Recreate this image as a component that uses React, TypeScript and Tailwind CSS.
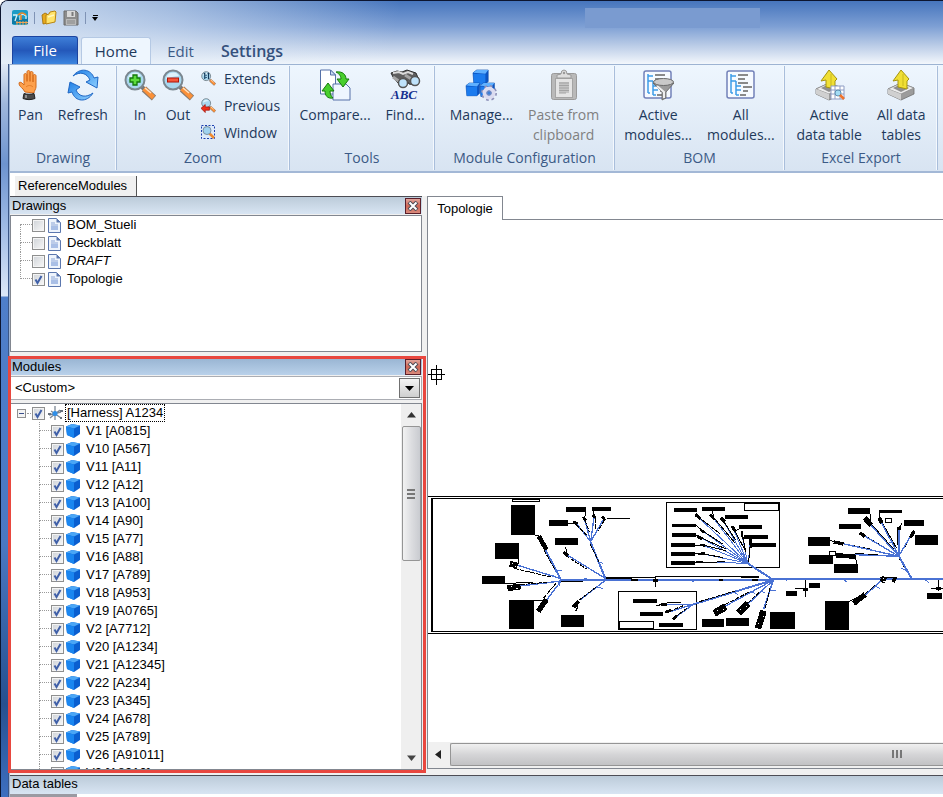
import React from "react";
import type { ReactNode } from "react";

/* ---------- ribbon icons ---------- */

function AppLogo() {
  return (
    <svg width="16" height="16" viewBox="0 0 16 16">
      <rect width="16" height="15" rx="2" fill="#1c9cc6" />
      <path d="M0 8 C5 3 9 13 16 7 V14 H0Z" fill="#0c7aa6" />
      <path d="M1 5h4l-2 6M8 10V6l3-2 3 2v3" stroke="#d8f2f8" strokeWidth="1.3" fill="none" />
      <path d="M6 5c3-3 6-2 8 0M9 5v5" stroke="#e98a2a" strokeWidth="1.6" fill="none" />
      <path d="M4 12.500h12M5 11v4M8 11v4M11 11v4M14 11v4" stroke="#f0a455" strokeWidth="1" />
    </svg>
  );
}

function OpenIcon() {
  return (
    <svg width="16" height="16" viewBox="0 0 16 16">
      <path d="M1 5l3-2 2 1 1 9-5 1z" fill="#e8a91c" stroke="#9a6a05" strokeWidth=".8" />
      <path d="M5 5l3-1 1-2 5-1 1 1-1 10-9 2z" fill="#ffe36a" stroke="#b98510" strokeWidth="1" />
      <path d="M7 7l6-2" stroke="#fff7c0" strokeWidth="1.500" />
    </svg>
  );
}

function SaveIcon() {
  return (
    <svg width="16" height="16" viewBox="0 0 16 16">
      <path d="M1 1h12l2 2v12H1z" fill="#8d8d8d" stroke="#6d6d6d" />
      <rect x="4" y="1" width="8" height="6" fill="#d9d9d9" />
      <rect x="8.500" y="2" width="2" height="4" fill="#7a7a7a" />
      <rect x="3" y="9" width="10" height="6" fill="#b9b9b9" />
      <path d="M4 11h8M4 13h8" stroke="#858585" />
    </svg>
  );
}

function HandIcon() {
  return (
    <svg width="24" height="32" viewBox="3 0 24 32">
      <path
        d="M10 23 L8 20 C6 18 4 17 4 14 C4 13 6 13 7 14 L9 16 V6 C9 4 11.500 4 12 6 V12 V3 C12 1 15 1 15 3 V12 V4 C15 2 18 2 18 4 V13 V7 C18 5 21 5 21 7 V18 C21 20 19 22 19 24Z"
        fill="#fda04c"
        stroke="#d26a1b"
        strokeWidth="1"
      />
      <path d="M12 6v7M15 5v8M18 7v6M11 18c2-2 5-2 7 0" stroke="#e27b28" fill="none" />
      <path d="M9 24.500c3 1 7 1 10 0l1 5c-4 1.500-8 1.500-12 0z" fill="#4a4a4a" stroke="#222" />
      <path d="M11 26v3" stroke="#aaa" strokeWidth="1.500" />
    </svg>
  );
}

function RefreshIcon() {
  return (
    <svg width="32" height="32" viewBox="0 0 32 32">
      <defs>
        <linearGradient id="rf" x1="0" y1="0" x2="1" y2="1">
          <stop offset="0" stopColor="#1f7fe6" />
          <stop offset="1" stopColor="#8fd0ff" />
        </linearGradient>
      </defs>
      <path d="M6 7 C13-2 24 0 27 9 L31 8 30 19 19 13 23 11 C20 4 13 2 6 7Z" fill="url(#rf)" stroke="#1e66c4" />
      <path d="M26 24 C20 34 8 33 5 23 L1 24 3 13 13 18 9 21 C12 28 19 29 26 24Z" fill="url(#rf)" stroke="#1e66c4" />
    </svg>
  );
}

function Lens({ size, children }: { size: number; children?: ReactNode }) {
  return (
    <svg width={size} height={size} viewBox="0 0 32 32">
      <path d="M18 18l4 4" stroke="#777" strokeWidth="4" />
      <path d="M20 20l10 9" stroke="#8a7a6c" strokeWidth="6.500" />
      <path d="M20 19.500l9.500 9" stroke="#fb9038" strokeWidth="4.500" />
      <path d="M21 19l6 5" stroke="#ffe0bd" strokeWidth="1.500" />
      <circle cx="11" cy="11" r="9.500" fill="#a9d8ef" stroke="#7b8790" strokeWidth="2" />
      <path d="M4 10a7 7 0 0 1 13-3c-4 0-8 1-13 3z" fill="#def2fb" />
      {children}
    </svg>
  );
}

function ZoomInIcon() {
  return (
    <Lens size={32}>
      <path d="M9 6h4v3h3v4h-3v3H9v-3H6V9h3z" fill="#5ddc3c" stroke="#12780c" strokeWidth="1.300" />
    </Lens>
  );
}

function ZoomOutIcon() {
  return (
    <Lens size={32}>
      <rect x="5.500" y="9" width="11" height="4" fill="#f6573a" stroke="#b01508" strokeWidth="1" />
    </Lens>
  );
}

function ExtendsIcon() {
  return (
    <Lens size={15}>
      <path d="M6 6l2-1v12M14 6l2-1v12M11 8v2M11 13v2" stroke="#123a5c" strokeWidth="2.500" fill="none" />
    </Lens>
  );
}

function PreviousIcon() {
  return (
    <Lens size={15}>
      <path d="M0 22l9-8v5h9v7H9v5z" fill="#ee2f1a" stroke="#9c0f05" strokeWidth="1.500" />
    </Lens>
  );
}

function ZoomWindowIcon() {
  return (
    <svg width="15" height="15" viewBox="0 0 15 15">
      <rect x=".5" y=".5" width="13" height="13" fill="#dceafa" stroke="#1c3fae" strokeDasharray="2 1.500" />
      <path d="M8 8l5 5" stroke="#f08a30" strokeWidth="2.500" />
      <circle cx="6" cy="5.500" r="4" fill="#9fd2f0" stroke="#7b8fa0" />
    </svg>
  );
}

function CompareIcon() {
  return (
    <svg width="32" height="32" viewBox="0 0 32 32">
      <path d="M1.500 1h10l5 5v19h-15z" fill="#fff" stroke="#5671a8" />
      <path d="M11.500 1v5h5z" fill="#c9dcf5" stroke="#5671a8" />
      <path d="M14 15h13l4 4v12H14z" fill="#eef6ff" stroke="#5671a8" />
      <path d="M17 3 C24 2 27 6 27 10 H30 L24 18 18 10 H22 C22 8 21 5 17 3Z" fill="#48cf2d" stroke="#167a0c" />
      <path d="M14 29 C8 30 6 26 6 22 H3 L9 14 15 22 H11 C11 25 12 27 14 29Z" fill="#48cf2d" stroke="#167a0c" />
    </svg>
  );
}

function FindIcon() {
  return (
    <svg width="32" height="32" viewBox="0 0 32 32">
      <path d="M2 4l6-2 5 1 5-2 9 3 3 7-4 5-6-1-3-5-2 5-6-1-5-6z" fill="#5f5f5f" stroke="#2e2e2e" />
      <path d="M4 4l6-1 4 2 5-2 5 2" stroke="#dcdcdc" strokeWidth="2" fill="none" />
      <path d="M4 8l7 5M16 6l8 5" stroke="#a5a5a5" strokeWidth="3" />
      <circle cx="14" cy="14" r="4.500" fill="#bfe2fa" stroke="#555" strokeWidth="1.500" />
      <circle cx="26" cy="12" r="4.500" fill="#bfe2fa" stroke="#555" strokeWidth="1.500" />
      <text x="2" y="30" fontFamily="Liberation Serif, serif" fontStyle="italic" fontWeight="700" fontSize="13" fill="#15308f">
        ABC
      </text>
    </svg>
  );
}

function Block({ x, y, s }: { x: number; y: number; s: number }) {
  return (
    <g transform={`translate(${x} ${y}) scale(${s})`}>
      <path d="M0 3l4-3h12v12l-3 3H1z" fill="#0c55c4" stroke="#0a4cab" strokeWidth=".7" />
      <path d="M0 3l4-3h12l-3 4z" fill="#5fb0ff" />
      <path d="M.5 4l12.500.5V15H1z" fill="#1b7bee" />
    </g>
  );
}

function ManageIcon() {
  return (
    <svg width="32" height="32" viewBox="0 0 32 32">
      <Block x={8} y={1} s={0.95} />
      <Block x={1} y={14} s={0.85} />
      <Block x={15} y={14} s={0.9} />
      <circle cx="24" cy="24" r="6.500" fill="none" stroke="#8d90b8" strokeWidth="3" strokeDasharray="2.500 2.600" />
      <circle cx="24" cy="24" r="4.500" fill="none" stroke="#dcdcf0" strokeWidth="4" />
      <circle cx="24" cy="24" r="2.200" fill="#3c7fd8" stroke="#8d90b8" />
    </svg>
  );
}

function PasteIcon() {
  return (
    <svg width="32" height="32" viewBox="0 0 32 32">
      <rect x="3.500" y="4.500" width="25" height="26" rx="2" fill="#b9b9b9" stroke="#9a9a9a" />
      <rect x="7.500" y="9.500" width="17" height="19" fill="#e4e4e4" stroke="#a4a4a4" />
      <path d="M9 9V6l4-1a3 4 0 0 1 6 0l4 1v3z" fill="#dedede" stroke="#9a9a9a" />
      <circle cx="16" cy="4" r="1.200" fill="#999" />
      <rect x="11" y="13" width="10" height="11" fill="#c4c4c4" />
      <path d="M11 14h10M11 16.500h10M11 19h10M11 21.500h10M11 24h7" stroke="#a4a4a4" />
    </svg>
  );
}

function TreeListIcon({ funnel = false }: { funnel?: boolean }) {
  return (
    <svg width="32" height="32" viewBox="0 0 32 32">
      <rect x="2" y="2" width="27" height="27" rx="2" fill="#f6faff" stroke="#7280b8" strokeWidth="1.500" />
      <path d="M6 5v19M6 7h5M6 12h5M11 12v14M11 17h5M11 21h5M6 24h2M11 26h3" stroke="#3d9ce8" strokeWidth="1.500" fill="none" />
      <path d="M13 6h10M13 10h7M13 14h10M18 18h9M18 22h5M15 26h6" stroke="#8a8a8a" strokeWidth="2" />
      {funnel && (
        <>
          <path d="M11 14l9 9v8l4-2v-6l8-9z" fill="#9b9b9b" stroke="#5f5f5f" strokeWidth=".8" />
          <path d="M15 17l7 6v6" stroke="#efefef" strokeWidth="2" fill="none" />
          <ellipse cx="21.500" cy="13" rx="10" ry="3.500" fill="#c9c9c9" stroke="#6b6b6b" />
        </>
      )}
    </svg>
  );
}

function ExportIcon({ table = false }: { table?: boolean }) {
  return (
    <svg width="32" height="32" viewBox="0 0 32 32">
      <path d="M3 20l13-6 13 5v6l-13 6-13-6z" fill="#9c9c9c" stroke="#6f6f6f" strokeWidth=".8" />
      <path d="M3 20l13-6 13 5-13 6z" fill="#ededed" stroke="#8b8b8b" strokeWidth=".8" />
      <path d="M16 25v6l-13-6v-5z" fill="#d0d0d0" />
      <path d="M8 19l8-4 8 4-8 4z" fill="#8e8e8e" />
      <path d="M16 1l8 9-2 2v8l-9-2v-7l-5 1z" fill="#f0df35" stroke="#a59410" />
      <path d="M18 5v12" stroke="#d6c626" strokeWidth="1.500" />
      {table && (
        <>
          <path d="M18 17h13v13H18z" fill="#fff" stroke="#8e9cc4" />
          <path d="M18 21h13M18 25h13M22 17v13M27 17v13" stroke="#8e9cc4" />
          <circle cx="25" cy="24" r="3" fill="#a3dcf5" stroke="#5c8fb0" />
          <path d="M27 26l4 4" stroke="#f0722a" strokeWidth="2.500" />
        </>
      )}
    </svg>
  );
}

/* ---------- ribbon ---------- */

function BigButton({ icon, lines, disabled = false, width = "w-auto" }: { icon: ReactNode; lines: string[]; disabled?: boolean; width?: string }) {
  return (
    <button
      disabled={disabled}
      className={`flex flex-col items-center text-sm leading-5 text-[#1e395b] disabled:text-[#808080] ${width}`}
    >
      <span className="mb-1 block h-8">{icon}</span>
      {lines.map((l) => (
        <span key={l} className="whitespace-nowrap">
          {l}
        </span>
      ))}
    </button>
  );
}

function SmallButton({ icon, label }: { icon: ReactNode; label: string }) {
  return (
    <button className="flex h-[27px] items-center gap-2 text-sm text-[#1e395b]">
      {icon}
      {label}
    </button>
  );
}

function Group({ title, width, children }: { title: string; width: string; children: ReactNode }) {
  return (
    <section className={`flex shrink-0 flex-col border-r border-[#a9bedb] shadow-[inset_-1px_0_0_#f4f8fd] ${width}`}>
      <div className="flex flex-1 items-start justify-center gap-[15px] pt-[3px]">{children}</div>
      <h2 className="h-[22px] text-center text-sm leading-5 text-[#3b5a86]">{title}</h2>
    </section>
  );
}

function Ribbon() {
  return (
    <div className="flex h-[108px] overflow-hidden border-b-2 border-[#a3b8d6] bg-linear-to-b from-[#eef6fe] to-[#d8e4f2] py-px">
      <Group title="Drawing" width="w-[107px]">
        <BigButton icon={<HandIcon />} lines={["Pan"]} />
        <BigButton icon={<RefreshIcon />} lines={["Refresh"]} />
      </Group>
      <Group title="Zoom" width="w-[173px]">
        <div className="flex pr-[5px]">
          <BigButton icon={<ZoomInIcon />} lines={["In"]} width="w-[38px]" />
          <BigButton icon={<ZoomOutIcon />} lines={["Out"]} width="w-[38px]" />
          <div className="-mt-1 ml-1 flex flex-col">
            <SmallButton icon={<ExtendsIcon />} label="Extends" />
            <SmallButton icon={<PreviousIcon />} label="Previous" />
            <SmallButton icon={<ZoomWindowIcon />} label="Window" />
          </div>
        </div>
      </Group>
      <Group title="Tools" width="w-[145px]">
        <BigButton icon={<CompareIcon />} lines={["Compare..."]} />
        <BigButton icon={<FindIcon />} lines={["Find..."]} />
      </Group>
      <Group title="Module Configuration" width="w-[180px]">
        <BigButton icon={<ManageIcon />} lines={["Manage..."]} />
        <BigButton icon={<PasteIcon />} lines={["Paste from", "clipboard"]} disabled />
      </Group>
      <Group title="BOM" width="w-[170px]">
        <BigButton icon={<TreeListIcon funnel />} lines={["Active", "modules..."]} />
        <BigButton icon={<TreeListIcon />} lines={["All", "modules..."]} />
      </Group>
      <Group title="Excel Export" width="w-[153px]">
        <BigButton icon={<ExportIcon table />} lines={["Active", "data table"]} />
        <BigButton icon={<ExportIcon />} lines={["All data", "tables"]} />
      </Group>
    </div>
  );
}

function TitleBar() {
  return (
    <header className="flex h-[63px] shrink-0 flex-col justify-between bg-[linear-gradient(100deg,rgba(226,236,247,.85)_0%,rgba(226,236,247,.55)_18%,rgba(226,236,247,0)_42%),linear-gradient(to_bottom,#4675bd_0%,#7d9fd4_40%,#b5c8e5_68%,#f3f7fc_100%)] pl-[11px]">
      <div className="flex items-center pt-[7px]">
        <AppLogo />
        <span className="mx-[6px] h-3 w-px bg-[#7f93b5]" />
        <button aria-label="Open">
          <OpenIcon />
        </button>
        <button aria-label="Save" className="ml-[6px]">
          <SaveIcon />
        </button>
        <span className="mx-[6px] h-3 w-px bg-[#7f93b5]" />
        <button aria-label="Customize toolbar" className="flex flex-col items-center gap-px">
          <span className="h-px w-[5px] bg-black" />
          <svg width="6" height="4" viewBox="0 0 6 4">
            <path d="M0 0h6L3 4z" />
          </svg>
        </button>
        <span className="ml-auto mr-[183px] h-5 w-[175px] bg-[#7a9bd0]" />
      </div>
      <nav className="flex items-end">
        <button className="mr-[3px] h-7 w-[66px] rounded-t-[3px] border border-b-0 border-[#1c44a0] bg-linear-to-b from-[#3f7fd8] via-[#2458ba] to-[#3d86e0] text-[15px] text-white">
          File
        </button>
        <button className="-mb-px h-7 w-[70px] rounded-t-[3px] border border-b-0 border-[#b5c9e4] bg-[#eef6fe] text-[15px] text-[#1e395b]">
          Home
        </button>
        <button className="h-[26px] w-[59px] text-[15px] text-[#3b5a86]">Edit</button>
        <button className="h-[26px] px-[11px] text-base font-semibold text-[#34507c]">Settings</button>
      </nav>
    </header>
  );
}

/* ---------- trees ---------- */

function Check({ id, checked }: { id: string; checked: boolean }) {
  return (
    <span className="grid shrink-0">
      <input
        id={id}
        type="checkbox"
        defaultChecked={checked}
        className="peer col-start-1 row-start-1 size-[13px] appearance-none border border-[#8e8f8f] bg-linear-to-br from-[#cfd3d8] to-[#f8f8f8] shadow-[inset_0_0_0_1px_#f4f4f4]"
      />
      <svg className="pointer-events-none invisible col-start-1 row-start-1 peer-checked:visible" width="13" height="13" viewBox="0 0 13 13">
        <path d="M3.500 6.500l2 3.500 4-7" fill="none" stroke="#4060a8" strokeWidth="2" />
      </svg>
    </span>
  );
}

function PageIcon() {
  return (
    <svg width="13" height="15" viewBox="0 0 13 15">
      <path d="M.5.5h8l4 4v10H.5z" fill="#eef4fc" stroke="#5b77ae" />
      <path d="M8.500.5v4h4z" fill="#5b77ae" />
      <path d="M3 5h4M3 7h7" stroke="#8ba5d6" />
      <path d="M3 8h7v4H3z" fill="#a9bfe6" />
    </svg>
  );
}

function CubeIcon() {
  return (
    <svg width="14" height="14" viewBox="0 0 14 14">
      <path d="M0 2.500L6 0l8 1.500V10l-6 4-7-3z" fill="#0a5fd0" />
      <path d="M0 2.500L6 0l8 1.500-6 3z" fill="#4aa6f6" />
      <path d="M0 2.500l8 2V14l-7-3z" fill="#1a86f0" />
    </svg>
  );
}

function HarnessIcon() {
  return (
    <svg width="15" height="15" viewBox="0 0 15 15">
      <path d="M7 0v14M1 9l12-3M2 12l10-8M3 5l10 7" stroke="#7c8794" strokeWidth="1.300" />
      <circle cx="7" cy="7.500" r="2.500" fill="#2f8fe8" />
      <path d="M0 8h3M12 5h3M12 12h2" stroke="#69727d" strokeWidth="2" />
    </svg>
  );
}

function Guide({ half = "" }: { half?: string }) {
  return (
    <span className="flex h-[18px] w-[12px] shrink-0 flex-col">
      <span className={`h-[9px] border-b border-dotted border-[#9a9a9a] ${half === "first" ? "" : "border-l"}`} />
      <span className={`h-[9px] border-dotted border-[#9a9a9a] ${half === "last" ? "" : "border-l"}`} />
    </span>
  );
}

const drawings = [
  { name: "BOM_Stueli", on: false },
  { name: "Deckblatt", on: false },
  { name: "DRAFT", on: false, italic: true },
  { name: "Topologie", on: true },
];

const modules = [
  "V1 [A0815]", "V10 [A567]", "V11 [A11]", "V12 [A12]", "V13 [A100]", "V14 [A90]", "V15 [A77]",
  "V16 [A88]", "V17 [A789]", "V18 [A953]", "V19 [A0765]", "V2 [A7712]", "V20 [A1234]", "V21 [A12345]",
  "V22 [A234]", "V23 [A345]", "V24 [A678]", "V25 [A789]", "V26 [A91011]", "V3 [A8910]",
];

function PanelHeader({ title, active = false }: { title: string; active?: boolean }) {
  return (
    <div
      className={`flex h-[18px] shrink-0 items-center justify-between border-t border-[#4d4d55] pl-[2px] pr-[1px] ${
        active ? "bg-linear-to-b from-[#98b4d2] to-[#b9d1ea]" : "bg-linear-to-b from-[#bccbd9] to-[#d8e5f3]"
      }`}
    >
      <h2 className="leading-4">{title}</h2>
      <button
        aria-label={`Close ${title}`}
        className="flex h-4 w-4 items-center justify-center border border-[#5a1f2a] bg-linear-to-b from-[#e0a49b] via-[#cf6655] to-[#d98a7c]"
      >
        <svg width="12" height="10" viewBox="0 0 12 10">
          <path d="M2 1l8 8M10 1l-8 8" stroke="#4b4b55" strokeWidth="4" />
          <path d="M2.500 1.500l7 7M9.500 1.500l-7 7" stroke="#fff" strokeWidth="2" />
        </svg>
      </button>
    </div>
  );
}

function DrawingsPanel() {
  return (
    <section className="flex h-[156px] shrink-0 flex-col">
      <PanelHeader title="Drawings" />
      <ul className="mt-[1px] flex-1 border border-[#828790] bg-white">
        {drawings.map((d, i) => (
          <li key={d.name} className="flex h-[18px] items-center pl-[9px]">
            <Guide half={i === 0 ? "first" : i === drawings.length - 1 ? "last" : ""} />
            <Check id={`drawing-${i}`} checked={d.on} />
            <label htmlFor={`drawing-${i}`} className="ml-[3px] flex items-center gap-[6px]">
              <PageIcon />
              <span className={d.italic ? "italic" : ""}>{d.name}</span>
            </label>
          </li>
        ))}
      </ul>
    </section>
  );
}

function ModulesPanel() {
  return (
    <section className="relative mt-[5px] flex min-h-0 flex-1 flex-col pb-[3px]">
      <PanelHeader title="Modules" active />
      <div className="relative mt-px flex h-6 shrink-0 items-center border border-[#abadb3] bg-white">
        <select aria-label="Module configuration" className="h-full w-full appearance-none bg-white pl-[4px] outline-none">
          <option>&lt;Custom&gt;</option>
        </select>
        <span className="pointer-events-none absolute right-px flex h-5 w-[21px] items-center justify-center border border-[#707070] bg-linear-to-b from-[#f4f4f4] to-[#cfcfcf]">
          <svg width="9" height="5" viewBox="0 0 9 5">
            <path d="M0 0h9L4.500 5z" />
          </svg>
        </span>
      </div>
      <div className="mt-[3px] flex min-h-0 flex-1 border border-[#828790] bg-white">
        <div className="min-w-0 flex-1 overflow-hidden">
          <div className="flex h-[18px] items-center pl-[6px]">
            <button aria-label="Collapse" className="flex size-[9px] items-center justify-center border border-[#919191] bg-[#f3f3f3]">
              <span className="h-px w-[5px] bg-[#3a4f8c]" />
            </button>
            <span className="mx-px w-[4px] border-t border-dotted border-[#9a9a9a]" />
            <Check id="harness" checked />
            <label htmlFor="harness" className="ml-[3px] flex items-center gap-[2px]">
              <HarnessIcon />
              <span className="border border-dotted border-black px-px leading-4">[Harness] A1234</span>
            </label>
          </div>
          <ul>
            {modules.map((m, i) => (
              <li key={m} className="flex h-[18px] items-center pl-[28px]">
                <Guide />
                <Check id={`module-${i}`} checked />
                <label htmlFor={`module-${i}`} className="ml-[2px] flex items-center gap-[6px]">
                  <CubeIcon />
                  {m}
                </label>
              </li>
            ))}
          </ul>
        </div>
        <div className="flex w-5 flex-col items-center bg-[#efefef]">
          <svg className="my-2" width="9" height="6" viewBox="0 0 9 6">
            <path d="M0 5.500L4.500 0 9 5.500z" fill="#333" />
          </svg>
          <div className="flex h-[37%] w-[19px] flex-col items-center justify-center gap-[2px] rounded-[2px] border border-[#959595] bg-linear-to-r from-[#f2f2f2] via-[#dcdde0] to-[#c9cbd0]">
            <span className="h-[2px] w-2 bg-[#777]" />
            <span className="h-[2px] w-2 bg-[#777]" />
            <span className="h-[2px] w-2 bg-[#777]" />
          </div>
          <svg className="mb-2 mt-auto" width="9" height="6" viewBox="0 0 9 6">
            <path d="M0 .5h9L4.500 6z" fill="#444" />
          </svg>
        </div>
      </div>
      {/* highlight drawn over the panel's edges */}
      <div className="pointer-events-none absolute -left-[2px] -right-[4px] -top-px bottom-0 z-10 border-[3px] border-[#e8473f]" />
    </section>
  );
}

/* ---------- harness topology ---------- */

type Rect = [number, number, number, number];
type Line = [number, number, number, number];

const filled: Rect[] = [
  [273, 60, 72, 90], [225, 174, 72, 48], [186, 273, 69, 24], [267, 345, 75, 87], [387, 105, 57, 18],
  [405, 159, 69, 21], [438, 66, 60, 15], [516, 66, 57, 12], [423, 390, 69, 36],
  [762, 69, 68, 12], [756, 117, 72, 9], [756, 144, 72, 12], [753, 174, 72, 12], [753, 201, 72, 12], [753, 228, 72, 12],
  [846, 66, 69, 12], [915, 90, 69, 12], [957, 120, 69, 12], [972, 150, 72, 12], [996, 174, 72, 12],
  [639, 342, 72, 12], [660, 381, 69, 12], [717, 414, 72, 12],
  [846, 402, 66, 24], [918, 399, 69, 24], [1050, 381, 75, 51], [1098, 318, 33, 15], [1167, 294, 33, 15],
  [1215, 348, 72, 87], [1242, 237, 72, 27], [1167, 210, 72, 27], [1164, 156, 66, 27], [1257, 117, 66, 15],
  [1284, 69, 66, 18], [1377, 75, 69, 9], [1452, 105, 60, 18], [1485, 150, 69, 30], [1521, 324, 45, 18],
];

const outlined: Rect[] = [
  [277, 43, 82, 6], [739, 52, 339, 195], [973, 54, 103, 22], [595, 319, 235, 114], [598, 409, 103, 22],
  [1228, 199, 19, 11], [1396, 100, 19, 12],
];

const thick: Line[] = [
  [423, 285, 557, 285], [557, 285, 1060, 285], [1060, 283, 1580, 283], [423, 285, 375, 192], [557, 283, 512, 172],
  [983, 235, 1060, 285], [1437, 214, 1476, 283], [1060, 285, 820, 358],
];

const thin: Line[] = [
  [423, 281, 290, 240], [423, 288, 300, 303], [423, 288, 380, 345], [557, 281, 437, 207], [557, 285, 480, 345],
  [512, 170, 468, 114], [512, 170, 494, 104], [512, 170, 522, 98], [512, 170, 550, 104],
  [1060, 285, 900, 372], [1060, 285, 970, 370], [1060, 285, 1031, 372],
  [820, 358, 740, 358], [820, 358, 750, 380], [820, 358, 765, 398], [1383, 288, 1320, 345],
  [1437, 214, 1343, 110], [1437, 214, 1382, 108], [1437, 212, 1437, 132], [1437, 212, 1475, 148],
  [1437, 214, 1328, 150], [1437, 214, 1260, 174], [1437, 214, 1304, 209],
];

const fan: Line[] = [
  [983, 235, 832, 94], [983, 235, 848, 138], [983, 235, 842, 158], [983, 235, 848, 180], [983, 235, 846, 206],
  [983, 235, 840, 231], [983, 235, 878, 96], [983, 235, 908, 104], [983, 235, 940, 130], [983, 235, 966, 150],
  [985, 235, 990, 172],
];

const wires: Line[] = [
  [557, 276, 705, 276], [705, 276, 1018, 275], [557, 280, 636, 280], [423, 289, 490, 289], [904, 275, 1018, 277],
  [1060, 279, 1212, 279], [1230, 283, 1380, 280], [1380, 278, 1430, 279], [1476, 279, 1580, 281],
  [706, 277, 706, 305], [1156, 280, 1156, 335], [1126, 310, 1158, 310], [1556, 283, 1556, 318], [1534, 311, 1570, 311],
  [345, 150, 362, 155], [444, 114, 468, 114], [560, 101, 630, 101], [294, 222, 294, 236], [255, 296, 340, 291],
  [437, 185, 440, 205], [497, 81, 494, 98], [519, 78, 522, 92], [340, 346, 375, 346], [878, 78, 880, 94],
  [1350, 87, 1352, 112], [1377, 84, 1380, 100], [1446, 114, 1437, 130], [1230, 167, 1255, 172], [1305, 211, 1310, 236],
  [1287, 350, 1320, 333], [740, 352, 782, 352], [708, 362, 740, 356],
  [826, 119, 846, 136], [828, 150, 842, 156], [825, 180, 845, 180], [825, 207, 845, 206], [825, 234, 915, 230],
  [840, 100, 900, 146], [848, 138, 910, 178], [842, 158, 918, 192], [848, 180, 918, 197], [846, 206, 910, 218],
  [878, 94, 946, 175], [908, 104, 946, 164], [940, 130, 975, 195], [966, 142, 977, 200], [992, 165, 986, 230],
  [958, 133, 940, 138], [972, 156, 966, 162], [996, 180, 992, 190],
  [1346, 108, 1420, 192], [1382, 105, 1430, 190], [1433, 132, 1433, 180], [1475, 148, 1452, 190],
  [1328, 148, 1385, 183], [1260, 174, 1350, 192], [1304, 205, 1400, 212], [1318, 342, 1370, 298],
  [1437, 218, 1455, 250], [983, 235, 1040, 270],
];

const dashed: Line[] = [
  [372, 195, 405, 255], [282, 250, 392, 276], [300, 299, 380, 292], [370, 340, 408, 295], [437, 212, 500, 252],
  [510, 176, 538, 232], [478, 345, 530, 305], [468, 118, 500, 150], [494, 104, 508, 140], [526, 100, 526, 132],
  [553, 106, 534, 138], [838, 350, 945, 318], [900, 366, 990, 320], [970, 366, 1020, 320], [1036, 370, 1050, 310],
  [745, 380, 790, 362], [765, 396, 800, 370],
];

/* connector bodies: centre, length, thickness, angle */
const connectors: [number, number, number, number, number][] = [
  [368, 174, 46, 14, 60], [281, 239, 24, 18, 15], [282, 307, 40, 18, -8], [367, 361, 44, 16, -55],
  [437, 206, 18, 10, 35], [468, 358, 24, 12, -50], [466, 114, 14, 9, 20], [493, 101, 12, 9, 60], [522, 94, 12, 9, 80],
  [551, 100, 14, 9, 60], [471, 370, 18, 4, -70], [732, 358, 20, 7, 0], [744, 379, 18, 8, -20], [764, 398, 14, 8, -40],
  [834, 95, 20, 9, 40], [847, 138, 18, 7, 35], [840, 158, 18, 9, 25], [848, 181, 18, 7, 10], [844, 206, 22, 7, -5],
  [838, 231, 22, 7, 0], [877, 96, 22, 8, 50], [908, 104, 18, 10, 45], [940, 130, 16, 9, 50], [966, 147, 20, 5, 85],
  [991, 172, 18, 7, 90], [900, 375, 40, 22, -30], [970, 369, 40, 20, -45], [1022, 404, 56, 20, -72],
  [1318, 342, 44, 16, -38], [1344, 110, 30, 16, 50], [1381, 106, 18, 12, 60], [1437, 131, 12, 10, 0],
  [1477, 148, 24, 10, -60], [1327, 149, 18, 10, 35], [1256, 174, 30, 10, 12], [1277, 213, 58, 14, 3],
  [1390, 284, 16, 18, 30], [1423, 284, 10, 16, 30], [1156, 314, 14, 8, 0], [1556, 310, 16, 8, 0], [706, 286, 16, 7, 0],
  [643, 285, 20, 5, 0], [903, 286, 14, 6, 0], [1005, 285, 20, 6, 0],
];

const ticks: Line[] = [
  [408, 256, 425, 258], [415, 290, 418, 302], [388, 273, 402, 270], [374, 290, 380, 298], [490, 283, 502, 279],
  [535, 232, 550, 235], [532, 306, 548, 310], [812, 285, 822, 291], [1098, 288, 1106, 282], [1272, 285, 1282, 292],
  [1516, 285, 1526, 292], [1444, 250, 1458, 256], [938, 320, 954, 328], [990, 318, 1006, 326], [1050, 316, 1068, 317],
  [1022, 318, 1036, 325], [1020, 258, 1036, 266], [1365, 303, 1380, 310], [1406, 172, 1420, 170],
];

function Lines({ data, stroke, width, dash }: { data: Line[]; stroke: string; width: number; dash?: string }) {
  return (
    <g stroke={stroke} strokeWidth={width} strokeDasharray={dash}>
      {data.map(([x1, y1, x2, y2], i) => (
        <line key={i} x1={x1} y1={y1} x2={x2} y2={y2} />
      ))}
    </g>
  );
}

function Topology() {
  return (
    <svg className="block h-[140px] w-[515px] shrink-0" viewBox="24 30 1545 420" shapeRendering="crispEdges" role="img" aria-label="Wiring harness topology">
      <Lines data={[[24, 34, 1569, 34], [34, 40, 1569, 40], [34, 439, 1569, 439], [24, 445, 1569, 445]]} stroke="#000" width={3} />
      <path d="M36 40V440" stroke="#000" strokeWidth="5" />
      {outlined.map(([x, y, w, h], i) => (
        <rect key={i} x={x} y={y} width={w} height={h} fill="none" stroke="#000" strokeWidth="3" />
      ))}
      <Lines data={fan} stroke="#4a72d4" width={3} />
      <Lines data={wires} stroke="#000" width={3} />
      <Lines data={thin} stroke="#4a72d4" width={4} />
      <Lines data={thick} stroke="#4a72d4" width={6} />
      <Lines data={ticks} stroke="#4a72d4" width={3} />
      <Lines data={dashed} stroke="#000" width={3} dash="14 3" />
      {connectors.map(([x, y, l, t, a], i) => (
        <g key={i} transform={`translate(${x} ${y}) rotate(${a})`}>
          <rect x={-l / 2} y={-t / 2} width={l} height={t} />
          {t > 17 && <path d={`M${-l / 4} -3h4M${l / 6} 4h4`} stroke="#fff" strokeWidth="3" />}
        </g>
      ))}
      {filled.map(([x, y, w, h], i) => (
        <rect key={i} x={x} y={y} width={w} height={h} />
      ))}
    </svg>
  );
}

function Crosshair() {
  return (
    <svg className="absolute left-0 top-[145px]" width="17" height="20" viewBox="0 0 17 20" shapeRendering="crispEdges">
      <path d="M0 9.500h17M8.500 0v20" stroke="#000" />
      <rect x="3.500" y="4.500" width="10" height="10" fill="none" stroke="#000" />
      <rect x="6" y="7" width="5" height="5" fill="#fff" />
      <path d="M6 9.500h5M8.500 7v5" stroke="#000" />
    </svg>
  );
}

function CanvasPane() {
  return (
    <section className="mb-1 flex min-w-0 flex-1 flex-col">
      <div className="flex h-6 shrink-0 bg-white">
        <button className="w-[76px] border border-b-0 border-[#828790] bg-white text-center">Topologie</button>
        <span className="flex-1 border-b border-[#828790]" />
      </div>
      <div className="relative flex min-h-0 flex-1 flex-col border-b border-l border-[#828790] bg-white">
        <Crosshair />
        <div className="flex flex-1 items-center overflow-hidden pt-[168px]">
          <Topology />
        </div>
        <div className="flex h-[26px] shrink-0 items-center bg-[#f0f0f0] pb-[2px]">
          <svg className="mx-[7px] shrink-0" width="6" height="9" viewBox="0 0 6 9">
            <path d="M6 0v9L0 4.500z" fill="#222" />
          </svg>
          <div className="ml-[2px] flex h-[23px] flex-1 items-center justify-end gap-[2px] rounded-l-[2px] border border-r-0 border-[#959595] bg-linear-to-b from-[#f0f0f0] via-[#d5d5d7] to-[#c2c2c4] pr-[41px]">
            <span className="h-2 w-[2px] bg-[#777]" />
            <span className="h-2 w-[2px] bg-[#777]" />
            <span className="h-2 w-[2px] bg-[#777]" />
          </div>
        </div>
      </div>
    </section>
  );
}

export default function App() {
  return (
    <div className="flex h-screen flex-col overflow-hidden rounded-tl-lg border-l border-t border-[#0c1530] bg-white font-['Open_Sans','Noto_Sans',sans-serif]">
      <TitleBar />
      <div className="flex min-h-0 flex-1">
        <div className="w-2 shrink-0 border-r border-[#3b5687] bg-[linear-gradient(to_bottom,#dfe8f5_0px,#9fb7dc_40px,#6d93cf_100px,#9db9e4_160px,#dbe7f8_232px,#4f7fca_233px,#4a78c2_480px,#26508f_640px,#3d6fc0_733px)]" />
        <div className="flex min-w-0 flex-1 flex-col border-l border-t border-[#9db3d2]">
          <Ribbon />
          <main className="flex min-h-0 flex-1 flex-col font-['Liberation_Sans',Arial,sans-serif] text-[13px] text-black">
            <div className="flex h-[23px] shrink-0 items-end bg-white pl-[5px]">
              <button className="h-5 w-[122px] border-r border-[#555] bg-[#f0f0f0] px-[3px] text-left">ReferenceModules</button>
            </div>
            <div className="flex min-h-0 flex-1 gap-[5px] bg-[#f0f0f0]">
              <div className="flex w-[412px] shrink-0 flex-col">
                <DrawingsPanel />
                <ModulesPanel />
              </div>
              <CanvasPane />
            </div>
            <footer className="shrink-0 bg-[#f0f0f0] pt-[2px]">
              <h2 className="h-[19px] border-t border-[#4d4d55] bg-linear-to-b from-[#bccbd9] to-[#d8e5f3] pl-[2px] leading-4">Data tables</h2>
              <div className="h-[3px] bg-white">
                <div className="h-full w-[67px] bg-[#9a9aa2]" />
              </div>
            </footer>
          </main>
        </div>
      </div>
    </div>
  );
}
